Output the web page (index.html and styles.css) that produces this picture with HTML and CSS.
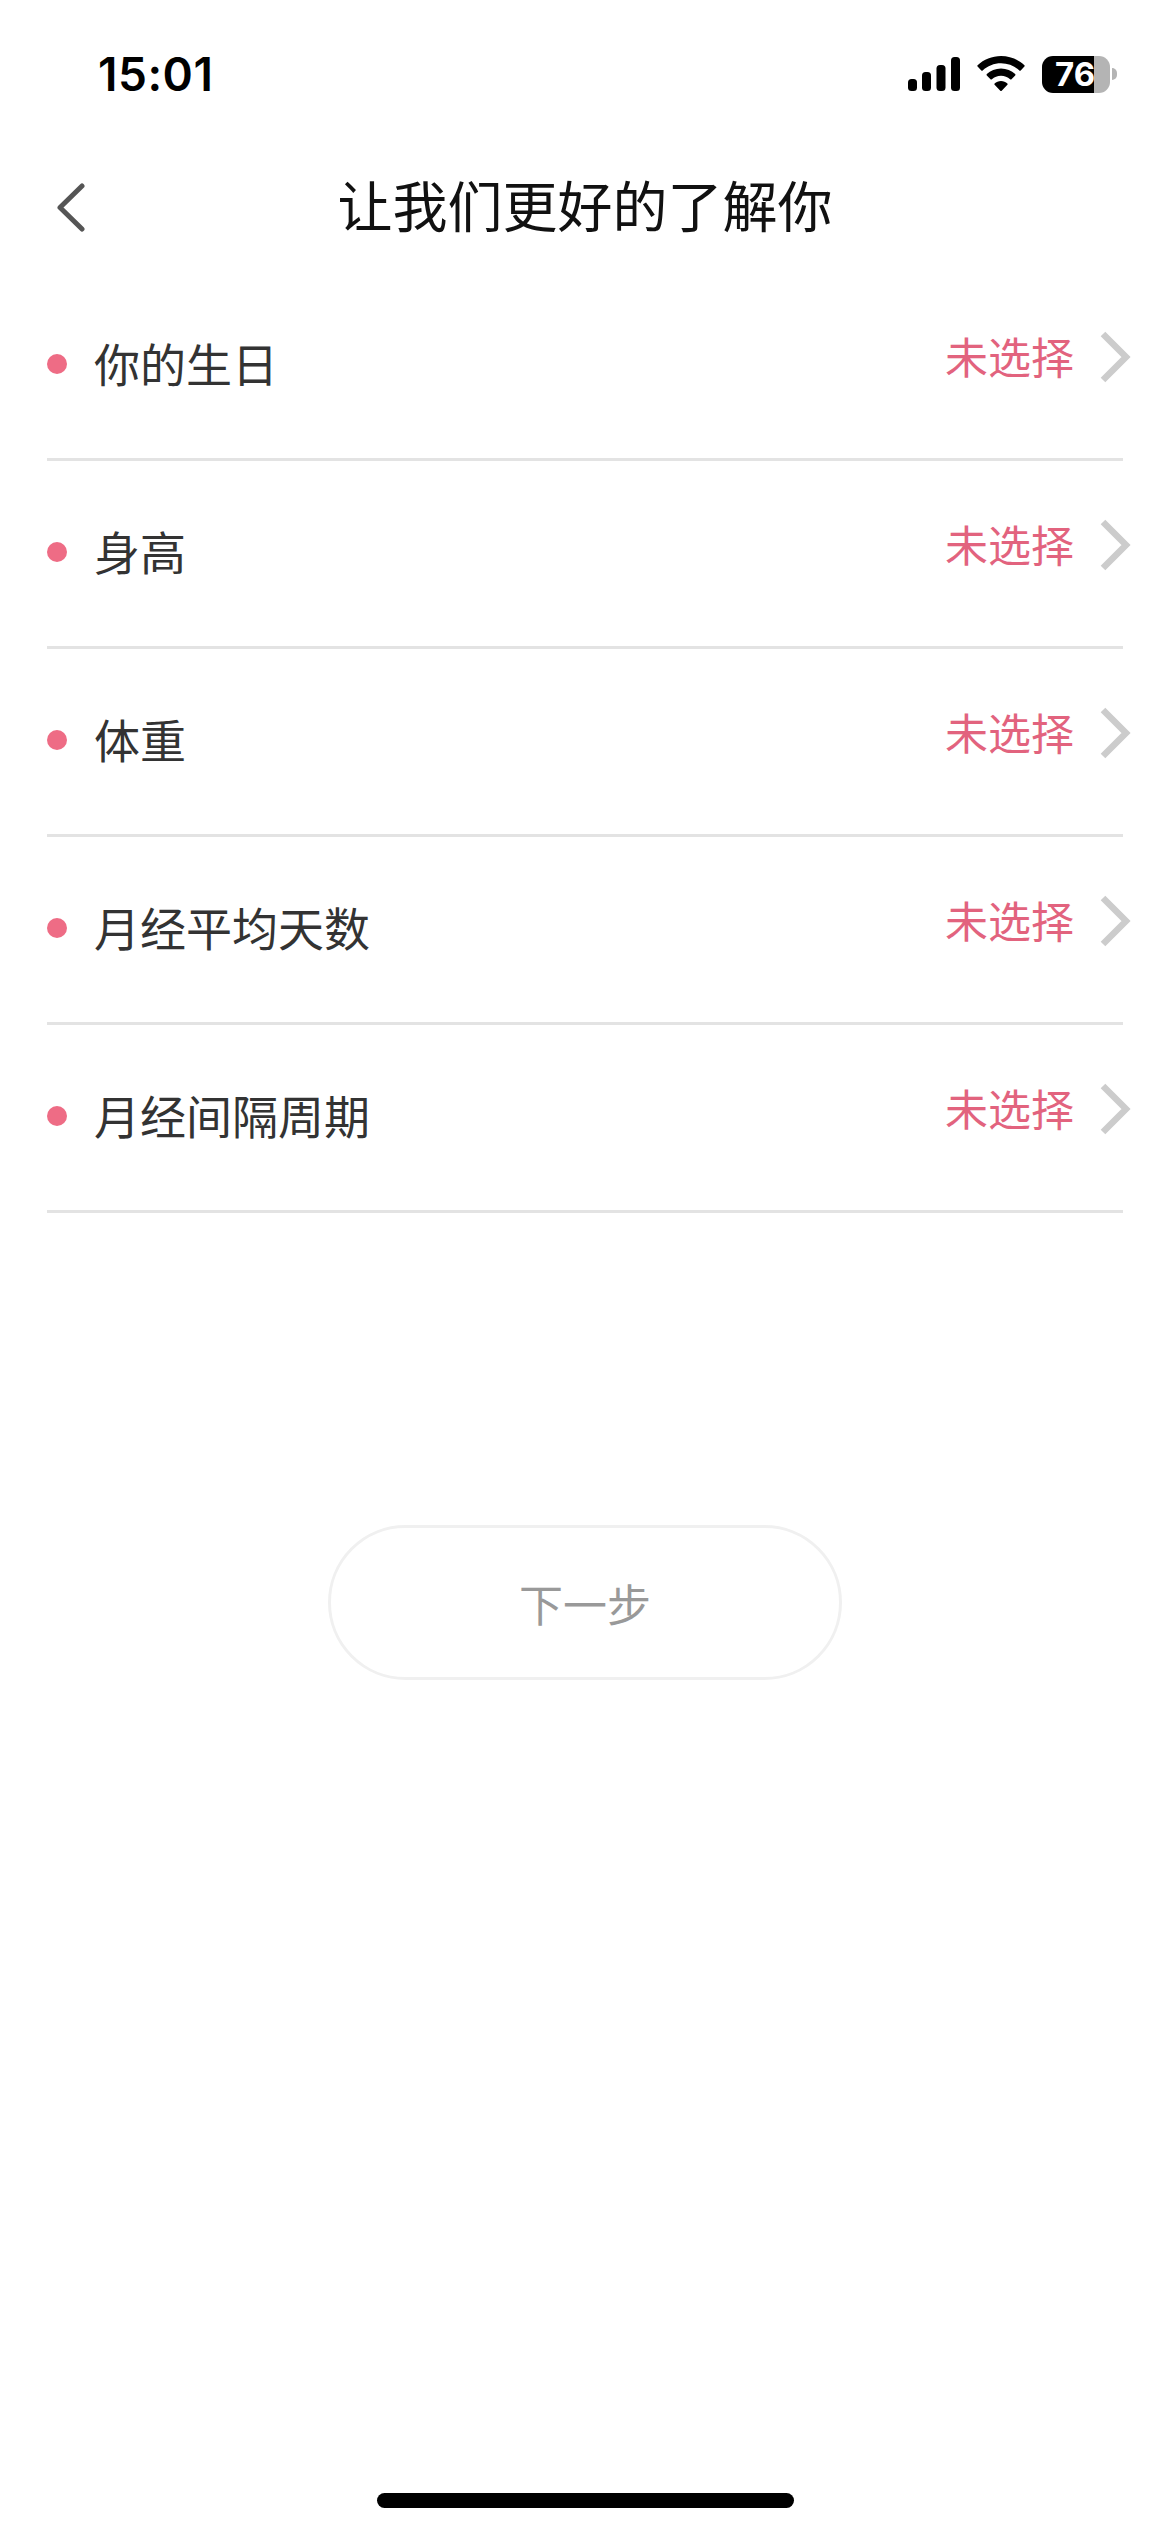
FILE: index.html
```html
<!DOCTYPE html>
<html lang="zh-CN">
<head>
<meta charset="utf-8">
<title>让我们更好的了解你</title>
<link rel="stylesheet" href="styles.css">
</head>
<body>
<div class="page">
  <header class="status">
    <span class="time">15:01</span>
    <div class="status-icons">
      <svg class="signal" width="52" height="34" viewBox="0 0 52 34"><rect x="0" y="22" width="9" height="12" rx="3.5"/><rect x="14" y="15" width="9" height="19" rx="3.5"/><rect x="28.500" y="8" width="9" height="26" rx="3.500"/><rect x="43" y="0" width="9" height="34" rx="3.500"/></svg>
      <svg class="wifi" width="48" height="36" viewBox="0 0 48 36"><path d="M24 0C15 0 6.800 3.500 0.600 9.200C0.200 9.600 0.200 10.200 0.600 10.600L4.300 14.400C4.700 14.800 5.300 14.800 5.700 14.400C10.500 10 17 7.300 24 7.300C31 7.300 37.500 10 42.300 14.400C42.700 14.800 43.300 14.800 43.700 14.400L47.400 10.600C47.800 10.200 47.800 9.600 47.400 9.200C41.200 3.500 33 0 24 0Z"/><path d="M24 12.500C18.500 12.500 13.500 14.600 9.800 18C9.400 18.400 9.400 19 9.800 19.400L13.500 23.200C13.900 23.600 14.500 23.600 14.900 23.200C17.300 21.100 20.500 19.800 24 19.800C27.500 19.800 30.700 21.100 33.100 23.200C33.500 23.600 34.100 23.600 34.500 23.200L38.200 19.400C38.600 19 38.600 18.400 38.200 18C34.500 14.600 29.500 12.500 24 12.500Z"/><path d="M24 25C21.500 25 19.300 25.900 17.600 27.400C17.200 27.800 17.200 28.400 17.600 28.800L23.300 34.700C23.700 35.100 24.300 35.100 24.700 34.700L30.400 28.800C30.800 28.400 30.800 27.800 30.400 27.400C28.700 25.900 26.500 25 24 25Z"/></svg>
      <div class="battery">
        <div class="battery-body"><span class="battery-level">76</span></div>
        <span class="battery-nub"></span>
      </div>
    </div>
  </header>

  <nav class="nav">
    <svg class="back" width="30" height="50" viewBox="0 0 30 50"><path d="M26 4L4 25.500L26 47"/></svg>
    <h1 class="title">让我们更好的了解你</h1>
    <span class="nav-spacer"></span>
  </nav>

  <ul class="list">
    <li class="row">
      <span class="dot"></span><span class="label">你的生日</span>
      <div class="value-group"><span class="value">未选择</span><svg class="chev" width="32" height="52" viewBox="0 0 32 52"><path d="M4 3L27 26L4 49"/></svg></div>
    </li>
    <li class="row">
      <span class="dot"></span><span class="label">身高</span>
      <div class="value-group"><span class="value">未选择</span><svg class="chev" width="32" height="52" viewBox="0 0 32 52"><path d="M4 3L27 26L4 49"/></svg></div>
    </li>
    <li class="row">
      <span class="dot"></span><span class="label">体重</span>
      <div class="value-group"><span class="value">未选择</span><svg class="chev" width="32" height="52" viewBox="0 0 32 52"><path d="M4 3L27 26L4 49"/></svg></div>
    </li>
    <li class="row">
      <span class="dot"></span><span class="label">月经平均天数</span>
      <div class="value-group"><span class="value">未选择</span><svg class="chev" width="32" height="52" viewBox="0 0 32 52"><path d="M4 3L27 26L4 49"/></svg></div>
    </li>
    <li class="row">
      <span class="dot"></span><span class="label">月经间隔周期</span>
      <div class="value-group"><span class="value">未选择</span><svg class="chev" width="32" height="52" viewBox="0 0 32 52"><path d="M4 3L27 26L4 49"/></svg></div>
    </li>
  </ul>

  <button class="next" type="button">下一步</button>

  <div class="home-indicator"></div>
</div>
</body>
</html>
```
FILE: styles.css
```css
* { box-sizing: border-box; }
html, body { margin: 0; padding: 0; background: #fff; }
body { font-family: "Noto Sans CJK SC", "Noto Sans", sans-serif; }
.page { width: 1170px; height: 2532px; display: flex; flex-direction: column; overflow: hidden; }

.status { height: 148px; padding: 0 53px 0 98px; display: flex; justify-content: space-between; align-items: center; }
.time { font-family: Inter, sans-serif; font-size: 46px; font-weight: 600; color: #000; letter-spacing: 0.5px; line-height: 1; }
.status-icons { display: flex; align-items: center; }
.signal { fill: #000; margin-right: 17px; }
.wifi { fill: #000; margin-right: 17px; }
.battery { display: flex; align-items: center; }
.battery-body { width: 68px; height: 37px; border-radius: 11px; background: linear-gradient(to right, #000 76%, #b4b4b4 76%); display: flex; align-items: center; padding-left: 13px; }
.battery-level { font-family: Inter, sans-serif; font-size: 33px; font-weight: 700; color: #fff; line-height: 1; letter-spacing: 0; }
.battery-nub { width: 5px; height: 12px; margin-left: 2px; background: #b4b4b4; border-radius: 0 6px 6px 0; }

.nav { height: 118px; margin-bottom: 7px; padding: 0 56px; display: flex; justify-content: space-between; align-items: center; }
.back { fill: none; stroke: #555; stroke-width: 5; stroke-linecap: round; stroke-linejoin: round; }
.title { margin: 0 0 8px; font-size: 55px; font-weight: 400; color: #111; line-height: 1; }
.nav-spacer { width: 30px; }

.list { list-style: none; margin: 0 47px; padding: 0; }
.row { height: 188px; border-bottom: 3px solid #e3e3e3; display: flex; align-items: center; }
.dot { width: 20px; height: 20px; border-radius: 50%; background: #ee6c85; margin-right: 27px; margin-bottom: 3px; }
.label { font-size: 46px; color: #333; line-height: 1; margin-bottom: 8px; }
.value-group { margin-left: auto; margin-right: -8px; padding-bottom: 18px; display: flex; align-items: center; gap: 25px; }
.value { font-size: 43px; color: #e2637e; line-height: 1; margin-bottom: 2px; }
.chev { fill: none; stroke: #ccc; stroke-width: 6.500; }

.next { display: block; align-self: center; margin-top: 312px; width: 514px; height: 155px; border: 3px solid #f0f0f0; border-radius: 78px; background: #fff; color: #999; font-family: inherit; font-size: 44px; line-height: 1; padding: 0; }

.home-indicator { margin-top: auto; margin-bottom: 24px; align-self: center; width: 417px; height: 15px; border-radius: 8px; background: #000; }
```
